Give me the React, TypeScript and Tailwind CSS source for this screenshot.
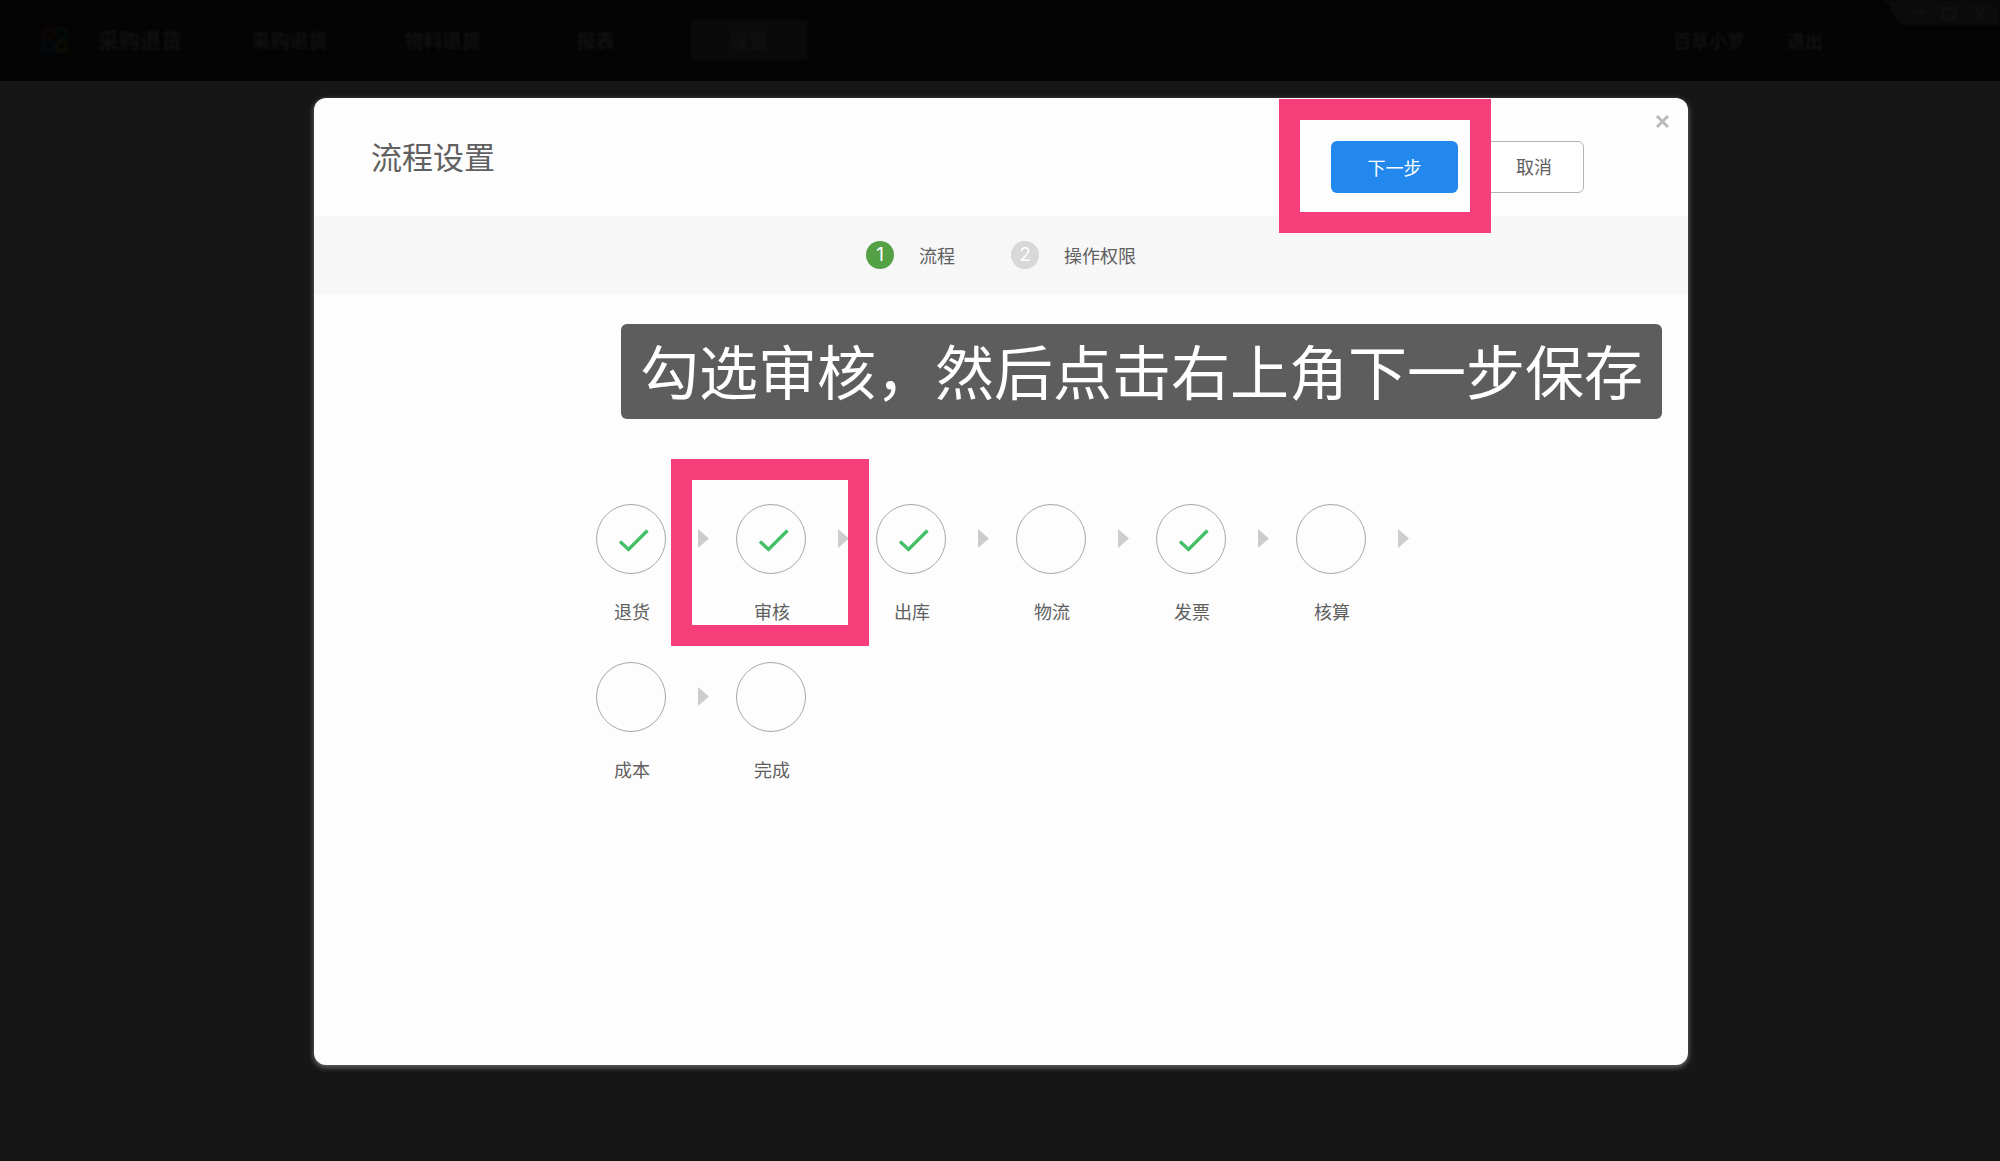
import React from 'react'

interface FlowNode {
  id: string
  label: string
  checked: boolean
  marked?: boolean
}

const navItems = ['采购退货', '物料退货', '报表', '设置']

const steps = ['流程', '操作权限']

const nodes: FlowNode[] = [
  { id: 'return', label: '退货', checked: true },
  { id: 'review', label: '审核', checked: true, marked: true },
  { id: 'outbound', label: '出库', checked: true },
  { id: 'logistics', label: '物流', checked: false },
  { id: 'invoice', label: '发票', checked: true },
  { id: 'accounting', label: '核算', checked: false },
  { id: 'cost', label: '成本', checked: false },
  { id: 'done', label: '完成', checked: false },
]

function Logo() {
  return (
    <svg width="26" height="26" viewBox="0 0 26 26" fill="none" strokeWidth="3" aria-hidden="true">
      <rect x="2" y="2" width="9" height="9" rx="2" stroke="#0f0605" />
      <rect x="15" y="2" width="9" height="9" rx="2" stroke="#040d08" />
      <rect x="2" y="15" width="9" height="9" rx="2" stroke="#040a0f" />
      <rect x="15" y="15" width="9" height="9" rx="2" stroke="#0f0e04" />
    </svg>
  )
}

function WindowControls() {
  return (
    <svg
      className="absolute top-0 right-0 blur-[1px]"
      width="118"
      height="25"
      viewBox="0 0 118 25"
      fill="none"
      stroke="#131313"
      strokeWidth="2"
      aria-hidden="true"
    >
      <path d="M0 0H118V25H24C16 25 14 20 11 14C8 7 6 2 0 0Z" fill="#0b0b0b" stroke="none" />
      <path d="M31 12H43" />
      <rect x="61" y="8" width="12" height="11" rx="2" />
      <path d="M93 8L103 19M103 8L93 19" />
    </svg>
  )
}

function TopBar() {
  return (
    <header className="relative flex h-[81px] items-start bg-[#040404] pl-[42px] text-[19px] font-bold text-[#111111]">
      <div className="flex h-20 items-center blur-[1px]">
        <Logo />
        <span className="ml-[30px] w-[115px] text-[21px]">采购退货</span>
      </div>
      <nav className="flex h-20 items-center blur-[1px]">
        {navItems.map(item => (
          <a
            key={item}
            href="#"
            className={`mx-[18px] flex h-10 w-[117px] items-center justify-center ${item === '设置' ? 'bg-[#0a0a0a]' : ''}`}
          >
            {item}
          </a>
        ))}
      </nav>
      <div className="mr-[177px] ml-auto flex h-20 items-center gap-[42px] text-[18px] blur-[1px]">
        <a href="#">百草小罗</a>
        <a href="#">退出</a>
      </div>
      <WindowControls />
    </header>
  )
}

function FlowItem({ node, last }: { node: FlowNode; last: boolean }) {
  return (
    <li className="relative h-[158px] pl-[15px]">
      <div className="flex items-center">
        <div className="relative size-[70px]">
          <input
            id={node.id}
            type="checkbox"
            defaultChecked={node.checked}
            className="peer block size-[70px] appearance-none rounded-full border border-[#a8a8a8]"
          />
          <svg
            className="pointer-events-none absolute inset-0 opacity-0 peer-checked:opacity-100"
            width="70"
            height="70"
            viewBox="0 0 70 70"
            fill="none"
            stroke="#44c068"
            strokeWidth="3.4"
          >
            <path d="M24 37.5L32.5 45.5L51.5 26.5" />
          </svg>
        </div>
        {!last && (
          <svg className="ml-8" width="11" height="20" viewBox="0 0 11 20" aria-hidden="true">
            <path d="M0 0L11 9.5L0 19Z" fill="#cdcdcd" />
          </svg>
        )}
      </div>
      <label htmlFor={node.id} className="mt-6 block w-[72px] text-center text-[18px] leading-[26px]">
        {node.label}
      </label>
      {/* highlight frame */}
      {node.marked && (
        <div className="pointer-events-none absolute -top-[45px] -left-[50px] z-10 h-[187px] w-[198px] border-[21px] border-[#f63e7b]" />
      )}
    </li>
  )
}

export default function App() {
  return (
    <div className="flex min-h-screen flex-col bg-[#161616] font-['Noto_Sans_CJK_SC',sans-serif] text-[#606060]">
      <TopBar />
      <main className="flex flex-1 justify-center pt-[17px] pb-24 pl-0.5">
        <div
          role="dialog"
          aria-labelledby="dialog-title"
          className="relative flex w-full max-w-[1374px] flex-col rounded-xl bg-[#fdfdfd] shadow-[0_2px_5px_1px_rgba(255,255,255,0.3)]"
        >
          <div className="flex h-[118px] items-start justify-between pr-[104px] pl-[57px]">
            <h1 id="dialog-title" className="pt-9 text-[31px] leading-[44px]">
              流程设置
            </h1>
            <div className="flex gap-[26px] pt-[43px] text-[18px]">
              <div className="relative">
                <button type="button" className="block h-[52px] w-[127px] rounded-md bg-[#2288ee] text-white">
                  下一步
                </button>
                <div className="pointer-events-none absolute -top-[42px] -right-[33px] -bottom-10 -left-[52px] z-10 border-[21px] border-[#f63e7b]" />
              </div>
              <button type="button" className="h-[52px] w-[100px] rounded-md border border-[#b4b4b4] bg-white pb-0.5">
                取消
              </button>
            </div>
          </div>
          <button type="button" aria-label="关闭" className="absolute top-4 right-[18px]">
            <svg width="15" height="15" viewBox="0 0 15 15" fill="none" stroke="#bbbbbb" strokeWidth="3">
              <path d="M2 2L13 13M13 2L2 13" />
            </svg>
          </button>

          <ol className="flex h-[78px] items-center justify-center gap-14 bg-[#f7f7f7] text-[18px]">
            {steps.map((step, i) => (
              <li key={step} className="flex items-center gap-[25px]">
                <span
                  className={`flex size-7 items-center justify-center rounded-full font-['Inter',sans-serif] text-[19px] text-white ${i === 0 ? 'bg-[#53a045]' : 'bg-[#d8d8d8]'}`}
                >
                  {i + 1}
                </span>
                {step}
              </li>
            ))}
          </ol>

          <p className="mt-[30px] mr-[26px] self-end rounded-md bg-[#5d5d5d] px-[19px] pb-1 text-[59px] leading-[91px] text-white">
            勾选审核，然后点击右上角下一步保存
          </p>

          <ul className="mx-auto mt-[85px] grid w-[840px] grid-cols-6">
            {nodes.map((node, i) => (
              <FlowItem key={node.id} node={node} last={i === nodes.length - 1} />
            ))}
          </ul>
        </div>
      </main>
    </div>
  )
}
